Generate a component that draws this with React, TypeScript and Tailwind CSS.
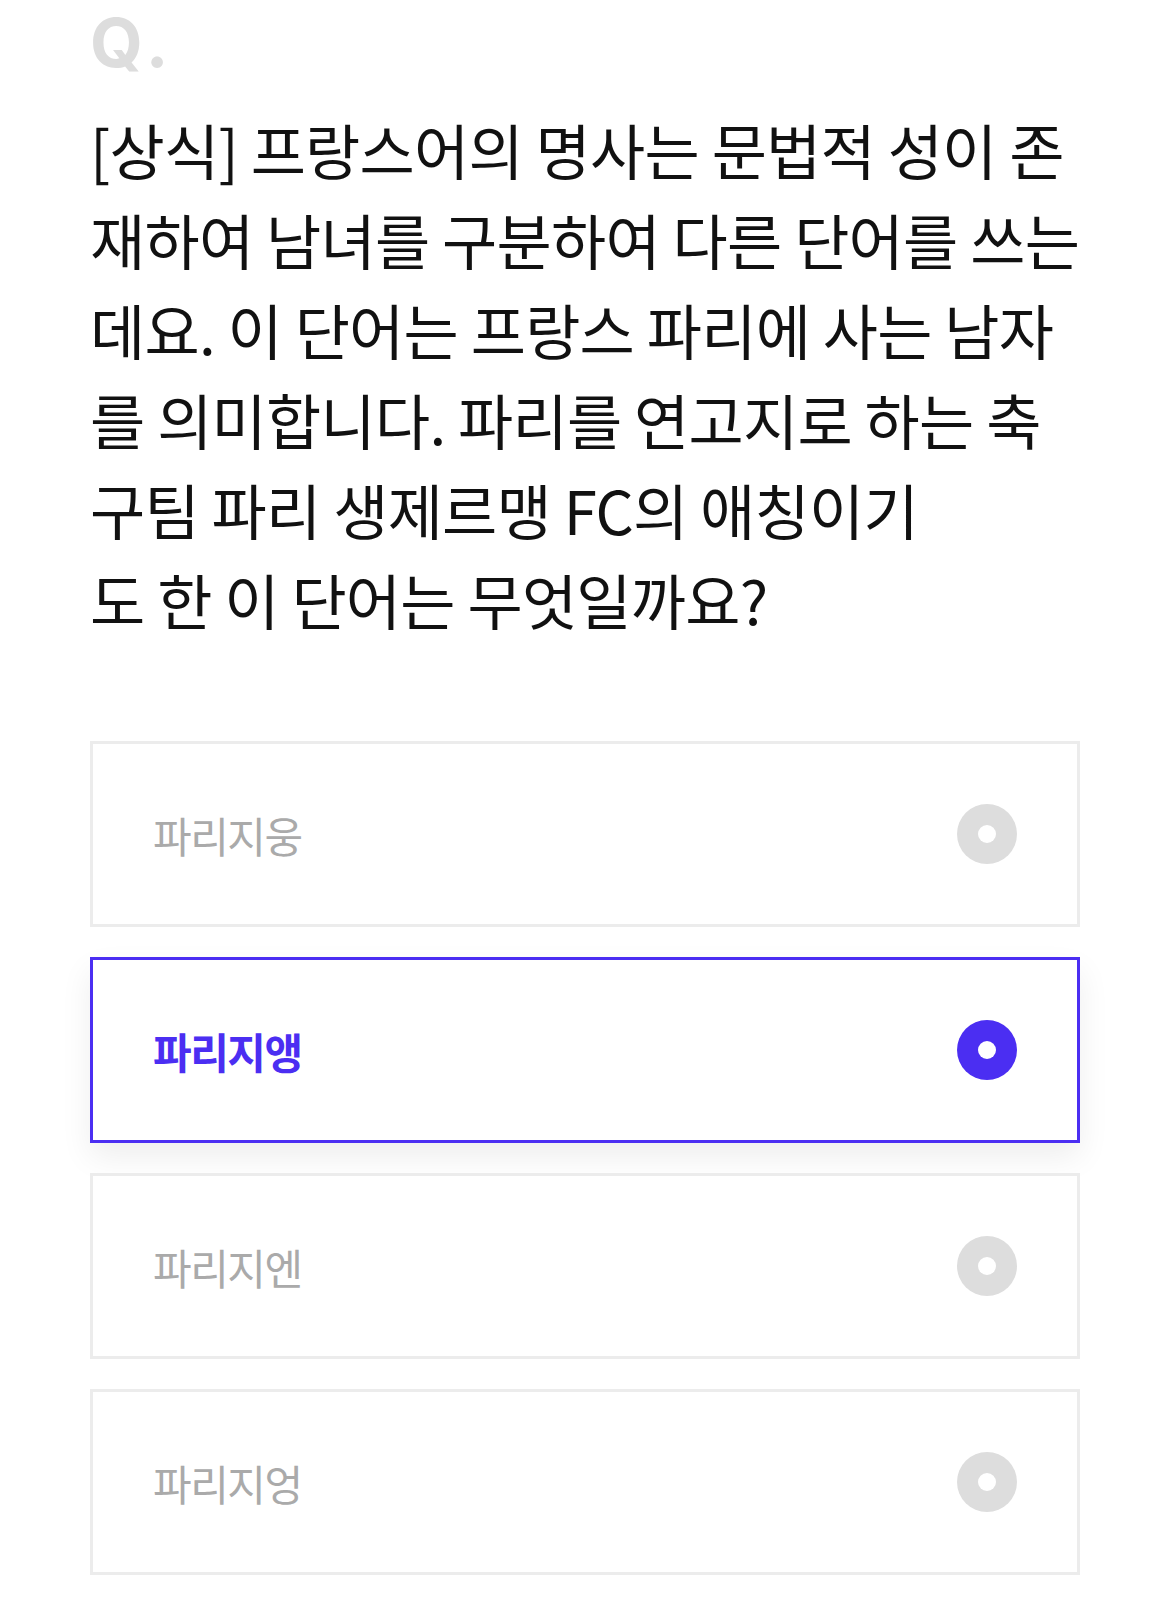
import React from "react";

const lines = [
  "[상식] 프랑스어의 명사는 문법적 성이 존",
  "재하여 남녀를 구분하여 다른 단어를 쓰는",
  "데요. 이 단어는 프랑스 파리에 사는 남자",
  "를 의미합니다. 파리를 연고지로 하는 축",
  "구팀 파리 생제르맹 FC의 애칭이기",
  "도 한 이 단어는 무엇일까요?",
];

const options = [
  { label: "파리지웅", selected: false },
  { label: "파리지앵", selected: true },
  { label: "파리지엔", selected: false },
  { label: "파리지엉", selected: false },
];

export default function App() {
  return (
    <div className="min-h-[1616px] bg-white px-[90px] font-['Noto_Sans_CJK_KR','Noto_Sans',sans-serif]">
      <div className="flex items-baseline pt-[8px] text-[68px] leading-none font-bold text-[#dddddd] font-['Inter','Roboto',sans-serif]">
        <span>Q</span>
        <span className="ml-[3px]">.</span>
      </div>
      <div className="mt-[28px] text-[60px] leading-[90px] tracking-[-0.75px] text-[#111111]">
        {lines.map((l, i) => (
          <div key={i} className="whitespace-nowrap">
            {l}
          </div>
        ))}
      </div>
      <div className="mt-[97px] flex flex-col gap-[30px]">
        {options.map((o) => (
          <div
            key={o.label}
            className={
              o.selected
                ? "flex h-[186px] items-center justify-between border-[3px] border-[#4b2ef2] bg-white pl-[60px] pr-[60px] shadow-[0_14px_30px_rgba(0,0,0,0.07)]"
                : "flex h-[186px] items-center justify-between border-[3px] border-[#ececec] bg-white pl-[60px] pr-[60px]"
            }
          >
            <span
              className={
                o.selected
                  ? "text-[42px] font-bold tracking-[-1.5px] text-[#4b2ef2]"
                  : "text-[42px] font-normal tracking-[-1.5px] text-[#aaaaaa]"
              }
            >
              {o.label}
            </span>
            <span
              className={
                o.selected
                  ? "flex h-[60px] w-[60px] items-center justify-center rounded-full bg-[#4b2ef2]"
                  : "flex h-[60px] w-[60px] items-center justify-center rounded-full bg-[#dddddd]"
              }
            >
              <span className="h-[18px] w-[18px] rounded-full bg-white" />
            </span>
          </div>
        ))}
      </div>
    </div>
  );
}
